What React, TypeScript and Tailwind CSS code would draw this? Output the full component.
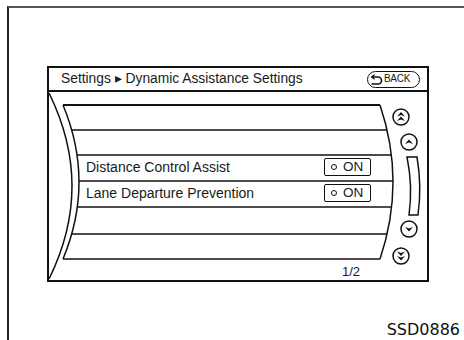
import React from "react";

const Arrow = ({ cx, cy, dir }: { cx: number; cy: number; dir: 1 | -1 }) => (
  <path
    d={`M${cx - 4},${cy + 2 * dir} L${cx},${cy - 2.5 * dir} L${cx + 4},${cy + 2 * dir} L${cx},${cy + 0.6 * dir} Z`}
    fill="#111"
  />
);

export default function App() {
  const lines = [
    [71.7, 130, 387.1],
    [77.0, 155, 391.4],
    [79.0, 181, 393.0],
    [77.3, 207, 391.6],
    [71.7, 234, 387.1],
  ];
  return (
    <div
      className="w-[464px] h-[340px] bg-white overflow-hidden pt-[6px] pl-[7px]"
      style={{ fontFamily: '"Liberation Sans", Arial, sans-serif' }}
    >
      <div className="h-[334px] border-t-2 border-l-2 border-t-[#555] border-l-[#222] pl-[38px] pt-[58px] flex flex-col">
        <div className="relative w-[382px] h-[216px] border-2 border-[#111] flex flex-col text-[#1a1a1a]">
          <svg
            className="absolute left-0 top-0"
            width={378}
            height={212}
            viewBox="49 68 378 212"
            fill="none"
          >
            <path d="M49,93 Q95,186 49,279" stroke="#111" strokeWidth={1.5} />
            <path d="M63,105 L380,105" stroke="#111" strokeWidth={1.8} />
            <path d="M63,259 L380,259" stroke="#111" strokeWidth={1.5} />
            <path d="M380,105 Q406,182 380,259" stroke="#111" strokeWidth={1.5} />
            <path d="M63,105 Q95,182 63,259" stroke="#111" strokeWidth={1.5} />
            {lines.map(([x1, y, x2], i) => (
              <path key={i} d={`M${x1},${y} L${x2},${y}`} stroke="#111" strokeWidth={1.5} />
            ))}
            <path
              d="M407,157 L417,157 Q422,186 418,215 L409,215 Q413,186 407,157 Z"
              stroke="#111"
              strokeWidth={1.5}
            />
            <circle cx={401} cy={117} r={8} stroke="#111" strokeWidth={1.5} />
            <circle cx={409} cy={142} r={8} stroke="#111" strokeWidth={1.5} />
            <circle cx={409} cy={229} r={8} stroke="#111" strokeWidth={1.5} />
            <circle cx={401} cy={256} r={8} stroke="#111" strokeWidth={1.5} />
            <Arrow cx={401} cy={114.5} dir={1} />
            <Arrow cx={401} cy={119} dir={1} />
            <Arrow cx={409} cy={142} dir={1} />
            <Arrow cx={409} cy={229} dir={-1} />
            <Arrow cx={401} cy={253.5} dir={-1} />
            <Arrow cx={401} cy={258} dir={-1} />
          </svg>

          <div className="h-[25px] border-b-2 border-[#111] flex items-center justify-between pl-[12px] pr-[7px]">
            <span className="text-[13.8px] leading-none">Settings ▸ Dynamic Assistance Settings</span>
            <div className="w-[53px] h-[17px] rounded-full border-[1.5px] border-[#111] flex items-center pl-[2px] gap-[1px]">
              <svg width={13} height={11} viewBox="0 0 13 11" fill="none">
                <polygon points="0.5,3 4.5,0 4.5,6" fill="#111" />
                <path d="M4.5,3 H8 A3.5,3.5 0 0 1 8,10 H1.5" stroke="#111" strokeWidth={1.6} />
              </svg>
              <span className="text-[10px] leading-none tracking-[-0.3px]">BACK</span>
            </div>
          </div>

          <div className="relative flex flex-col pt-[62px] pl-[37px]">
            {["Distance Control Assist", "Lane Departure Prevention"].map((t) => (
              <div key={t} className="h-[26px] w-[285px] flex items-center justify-between">
                <span className="text-[14px] leading-none">{t}</span>
                <div className="w-[47px] h-[18px] border-[1.5px] border-[#111] rounded-[2px] flex items-center pl-[6px] gap-[6px]">
                  <div className="w-[6px] h-[6px] rounded-full border-[1.5px] border-[#111]" />
                  <span className="text-[13.5px] leading-none">ON</span>
                </div>
              </div>
            ))}
            <div className="mt-[56px] pl-[256px] h-[18px] flex items-center text-[13px] leading-none">
              1/2
            </div>
          </div>
        </div>
        <div
          className="mt-[40px] pr-[4px] flex justify-end text-[16px] leading-[16px] text-[#111]"
          style={{ fontFamily: '"DejaVu Sans", sans-serif' }}
        >
          SSD0886
        </div>
      </div>
    </div>
  );
}
